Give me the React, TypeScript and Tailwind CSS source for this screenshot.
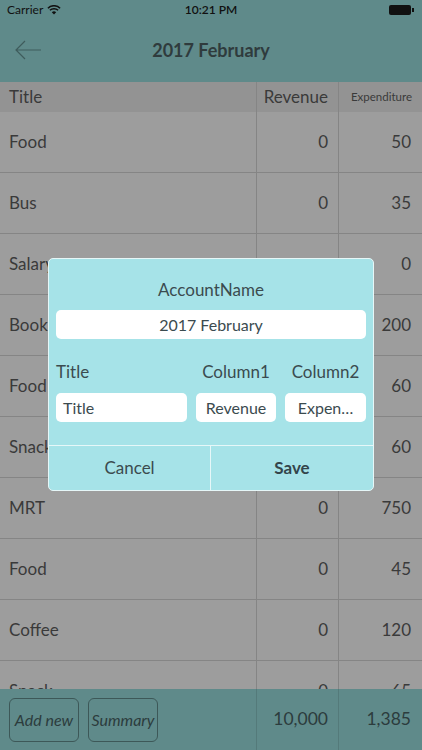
import React from "react";

const rows: [string, string, string][] = [
  ["Food", "0", "50"],
  ["Bus", "0", "35"],
  ["Salary", "", "0"],
  ["Book", "0", "200"],
  ["Food", "0", "60"],
  ["Snack", "0", "60"],
  ["MRT", "0", "750"],
  ["Food", "0", "45"],
  ["Coffee", "0", "120"],
  ["Snack", "0", "65"],
];

export default function App() {
  return (
    <div
      className="relative w-[422px] h-[750px] overflow-hidden flex flex-col bg-[#9d9d9d] text-[#3a3a3a]"
      style={{ fontFamily: "Lato, 'Open Sans', sans-serif" }}
    >
      {/* status + nav */}
      <div className="h-[82px] bg-[#5f8a8a] flex flex-col shrink-0">
        <div className="h-[20px] flex items-center justify-between px-[7px] text-[12px] text-[#111]">
          <div className="flex items-center gap-[4px] w-[100px]">
            <span>Carrier</span>
            <svg width="14" height="10" viewBox="0 0 14 10">
              <path d="M7 9.5 L4.8 7.2 A3.2 3.2 0 0 1 9.2 7.2 Z" fill="#111" />
              <path d="M2.9 5.3 A5.9 5.9 0 0 1 11.1 5.3" stroke="#111" strokeWidth="1.5" fill="none" />
              <path d="M0.9 3.2 A8.7 8.7 0 0 1 13.1 3.2" stroke="#111" strokeWidth="1.5" fill="none" />
            </svg>
          </div>
          <span className="font-semibold">10:21 PM</span>
          <div className="w-[100px] flex justify-end items-center pr-[1px]">
            <div className="w-[22px] h-[10px] bg-[#111] rounded-[2px]" />
            <div className="w-[1.5px] h-[4px] bg-[#111] ml-[1px]" />
          </div>
        </div>
        <div className="flex-1 relative flex items-center justify-center">
          <svg className="absolute left-[14px] top-[19px]" width="28" height="22" viewBox="0 0 28 22">
            <path d="M27 11 H2 M11 2 L2 11 L11 20" stroke="#3f5c5c" strokeWidth="1.2" fill="none" />
          </svg>
          <span className="text-[18px] font-bold text-[#2f3b3d] mt-[-1px]">2017 February</span>
        </div>
      </div>

      {/* header */}
      <div className="h-[30px] shrink-0 flex bg-[#939393] text-[#3a3a3a]">
        <div className="w-[257px] pl-[9px] flex items-center text-[17px] border-r border-[#858585]">Title</div>
        <div className="w-[82px] pr-[10px] flex items-center justify-end text-[17px] border-r border-[#858585]">Revenue</div>
        <div className="flex-1 pr-[10px] flex items-center justify-end text-[11.5px]">Expenditure</div>
      </div>

      {/* rows */}
      <div className="flex-1 overflow-hidden">
        {rows.map(([t, r, e], i) => (
          <div key={i} className="h-[61px] flex border-b border-[#858585]">
            <div className="w-[257px] pl-[9px] flex items-center text-[17px] border-r border-[#858585]">{t}</div>
            <div className="w-[82px] pr-[10px] flex items-center justify-end text-[17px] border-r border-[#858585]">{r}</div>
            <div className="flex-1 pr-[11px] flex items-center justify-end text-[17px]">{e}</div>
          </div>
        ))}
      </div>

      {/* footer */}
      <div className="h-[61px] shrink-0 flex bg-[#5f8a8a] text-[#2c3c3d]">
        <div className="w-[257px] flex items-center gap-[9px] pl-[9px] border-r border-[#547a7a]">
          <div className="w-[70px] h-[44px] border border-[#3d5858] rounded-[6px] flex items-center justify-center italic text-[16px]">Add new</div>
          <div className="w-[70px] h-[44px] border border-[#3d5858] rounded-[6px] flex items-center justify-center italic text-[16px]">Summary</div>
        </div>
        <div className="w-[82px] pr-[10px] flex items-center justify-end text-[17.5px] border-r border-[#547a7a]">10,000</div>
        <div className="flex-1 pr-[11px] flex items-center justify-end text-[17.5px]">1,385</div>
      </div>

      {/* dialog */}
      <div className="absolute left-[48px] top-[258px] w-[326px] h-[233px] bg-[#a6e3e8] border border-[#e6f7f8] rounded-[5px] flex flex-col text-[#3b4b4f]">
        <div className="flex-1 px-[7px] flex flex-col">
          <div className="h-[51px] pt-[19px] text-center text-[17px] leading-[24px]">AccountName</div>
          <div className="h-[29px] bg-white rounded-[5px] flex items-center justify-center text-[16px]">2017 February</div>
          <div className="flex mt-[20px] gap-[9px] text-[17px] h-[26px] items-center whitespace-nowrap">
            <div className="w-[131px]">Title</div>
            <div className="w-[80px] flex justify-center">Column1</div>
            <div className="flex-1 flex justify-center">Column2</div>
          </div>
          <div className="flex mt-[8px] gap-[9px] text-[16px] h-[29px]">
            <div className="w-[131px] bg-white rounded-[5px] flex items-center pl-[7px]">Title</div>
            <div className="w-[80px] bg-white rounded-[5px] flex items-center justify-center">Revenue</div>
            <div className="flex-1 bg-white rounded-[5px] flex items-center justify-center">Expen…</div>
          </div>
        </div>
        <div className="h-[45px] border-t border-[#e6f7f8] flex">
          <div className="w-[162px] border-r border-[#e6f7f8] flex items-center justify-center text-[17px]">Cancel</div>
          <div className="flex-1 flex items-center justify-center text-[17px] font-bold text-[#33454b]">Save</div>
        </div>
      </div>
    </div>
  );
}
